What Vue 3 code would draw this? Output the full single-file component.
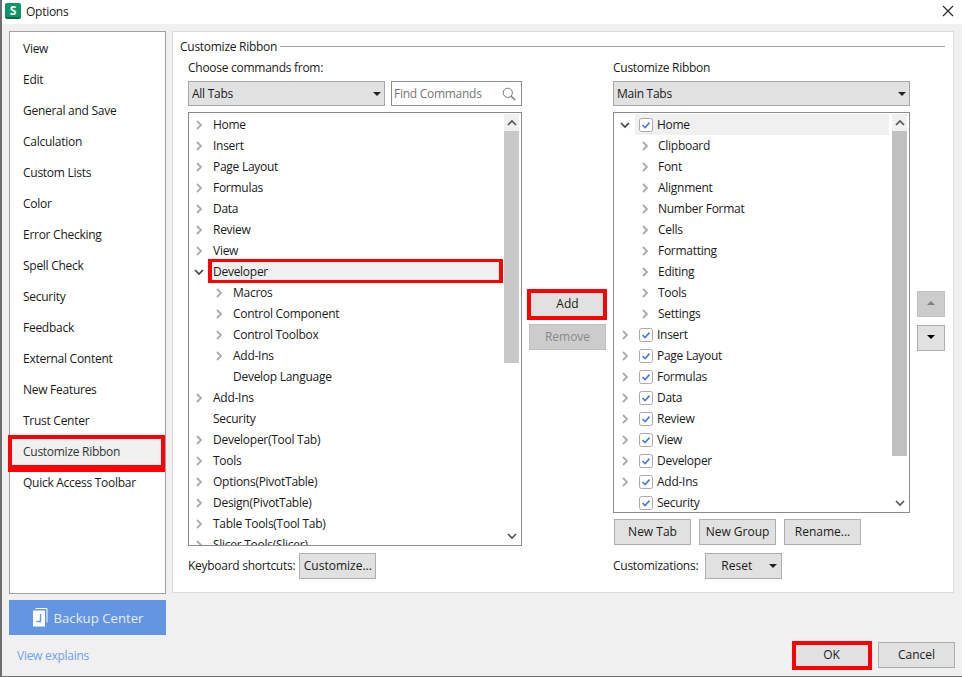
<script setup>
const navItems = ['View', 'Edit', 'General and Save', 'Calculation', 'Custom Lists', 'Color', 'Error Checking', 'Spell Check', 'Security', 'Feedback', 'External Content', 'New Features', 'Trust Center', 'Customize Ribbon', 'Quick Access Toolbar']

const commandRows = [
  { label: 'Home', level: 0 },
  { label: 'Insert', level: 0 },
  { label: 'Page Layout', level: 0 },
  { label: 'Formulas', level: 0 },
  { label: 'Data', level: 0 },
  { label: 'Review', level: 0 },
  { label: 'View', level: 0 },
  { label: 'Developer', level: 0, open: true, marked: true },
  { label: 'Macros', level: 1 },
  { label: 'Control Component', level: 1 },
  { label: 'Control Toolbox', level: 1 },
  { label: 'Add-Ins', level: 1 },
  { label: 'Develop Language', level: 1, leaf: true },
  { label: 'Add-Ins', level: 0 },
  { label: 'Security', level: 0, leaf: true },
  { label: 'Developer(Tool Tab)', level: 0 },
  { label: 'Tools', level: 0 },
  { label: 'Options(PivotTable)', level: 0 },
  { label: 'Design(PivotTable)', level: 0 },
  { label: 'Table Tools(Tool Tab)', level: 0 },
  { label: 'Slicer Tools(Slicer)', level: 0 }
]

const ribbonRows = [
  { label: 'Home', level: 0, open: true, hover: true },
  { label: 'Clipboard', level: 1 },
  { label: 'Font', level: 1 },
  { label: 'Alignment', level: 1 },
  { label: 'Number Format', level: 1 },
  { label: 'Cells', level: 1 },
  { label: 'Formatting', level: 1 },
  { label: 'Editing', level: 1 },
  { label: 'Tools', level: 1 },
  { label: 'Settings', level: 1 },
  { label: 'Insert', level: 0 },
  { label: 'Page Layout', level: 0 },
  { label: 'Formulas', level: 0 },
  { label: 'Data', level: 0 },
  { label: 'Review', level: 0 },
  { label: 'View', level: 0 },
  { label: 'Developer', level: 0 },
  { label: 'Add-Ins', level: 0 },
  { label: 'Security', level: 0, leaf: true }
]
</script>

<template>
  <div class="dialog">
    <header class="titlebar">
      <span class="app-icon">S</span>
      <span class="title">Options</span>
      <svg class="close" width="12" height="12" viewBox="0 0 12 12">
        <path d="M1 1l10 10M11 1L1 11" stroke="#222" stroke-width="1.1" fill="none" />
      </svg>
    </header>

    <div class="body">
      <aside class="side">
        <nav class="nav">
          <div
            v-for="item in navItems"
            :key="item"
            class="nav-item"
            :class="{ active: item === 'Customize Ribbon' }"
          >{{ item }}</div>
        </nav>
        <button class="backup">
          <svg width="16" height="19" viewBox="0 0 16 19">
            <path d="M3.5 0.5h11.5v14" stroke="#fff" fill="none" />
            <path d="M1 2.5h12v16h-12z" fill="#fff" />
            <path d="M8.5 6v7.5h-4" stroke="#6495e2" stroke-width="1.4" fill="none" />
          </svg>
          <span>Backup Center</span>
        </button>
        <a class="explain">View explains</a>
      </aside>

      <main class="main">
        <section class="panel">
          <div class="legend"><span>Customize Ribbon</span><i></i></div>
          <div class="columns">
            <div class="col-left">
              <div class="label">Choose commands from:</div>
              <div class="controls">
                <div class="select grow">
                  <span>All Tabs</span><b class="caret"></b>
                </div>
                <div class="search">
                  <span>Find Commands</span>
                  <svg width="14" height="14" viewBox="0 0 14 14">
                    <circle cx="5.8" cy="5.8" r="4.6" stroke="#777" fill="none" />
                    <path d="M9.2 9.2l4 4" stroke="#777" stroke-width="1.3" />
                  </svg>
                </div>
              </div>
              <div class="list list-left">
                <div class="rows">
                  <div
                    v-for="(row, i) in commandRows"
                    :key="i"
                    class="row"
                    :class="'lv' + row.level"
                  >
                    <svg v-if="row.open" class="chev" width="12" height="12" viewBox="0 0 12 12">
                      <path d="M2 4l4 4 4-4" stroke="#444" stroke-width="1.7" fill="none" />
                    </svg>
                    <svg v-else-if="!row.leaf" class="chev" width="12" height="12" viewBox="0 0 12 12">
                      <path d="M4 2l4 4-4 4" stroke="#aaa" stroke-width="1.8" fill="none" />
                    </svg>
                    <span v-else class="chev"></span>
                    <span class="row-text" :class="{ marked: row.marked }">{{ row.label }}</span>
                  </div>
                </div>
                <div class="scrollbar">
                  <div class="arrow">
                    <svg width="10" height="8" viewBox="0 0 10 8"><path d="M1 6l4-4 4 4" stroke="#555" stroke-width="1.7" fill="none" /></svg>
                  </div>
                  <div class="thumb thumb-left"></div>
                  <div class="track"></div>
                  <div class="arrow">
                    <svg width="10" height="8" viewBox="0 0 10 8"><path d="M1 2l4 4 4-4" stroke="#555" stroke-width="1.7" fill="none" /></svg>
                  </div>
                </div>
              </div>
              <div class="foot tight">
                <span>Keyboard shortcuts:</span>
                <button class="btn">Customize...</button>
              </div>
            </div>

            <div class="col-mid">
              <button class="btn add">Add</button>
              <button class="btn off">Remove</button>
            </div>

            <div class="col-right">
              <div class="label">Customize Ribbon</div>
              <div class="controls">
                <div class="select grow">
                  <span>Main Tabs</span><b class="caret"></b>
                </div>
              </div>
              <div class="list list-right">
                <div class="rows">
                  <div
                    v-for="(row, i) in ribbonRows"
                    :key="i"
                    class="row"
                    :class="'lv' + row.level"
                  >
                    <svg v-if="row.open" class="chev" width="12" height="12" viewBox="0 0 12 12">
                      <path d="M2 4l4 4 4-4" stroke="#444" stroke-width="1.7" fill="none" />
                    </svg>
                    <svg v-else-if="!row.leaf" class="chev" width="12" height="12" viewBox="0 0 12 12">
                      <path d="M4 2l4 4-4 4" stroke="#aaa" stroke-width="1.8" fill="none" />
                    </svg>
                    <span v-else class="chev"></span>
                    <span class="row-body" :class="{ hover: row.hover }">
                      <svg v-if="row.level === 0" class="check" width="14" height="14" viewBox="0 0 14 14">
                        <rect x="0.5" y="0.5" width="13" height="13" rx="2" fill="#fff" stroke="#a9a9a9" />
                        <path d="M3.5 7l2.6 2.6 4.4-5" stroke="#4a7fd0" stroke-width="1.7" fill="none" />
                      </svg>
                      <span class="row-text">{{ row.label }}</span>
                    </span>
                  </div>
                </div>
                <div class="scrollbar">
                  <div class="arrow">
                    <svg width="10" height="8" viewBox="0 0 10 8"><path d="M1 6l4-4 4 4" stroke="#555" stroke-width="1.7" fill="none" /></svg>
                  </div>
                  <div class="thumb thumb-right"></div>
                  <div class="track"></div>
                  <div class="arrow">
                    <svg width="10" height="8" viewBox="0 0 10 8"><path d="M1 2l4 4 4-4" stroke="#555" stroke-width="1.7" fill="none" /></svg>
                  </div>
                </div>
              </div>
              <div class="tab-btns">
                <button class="btn">New Tab</button>
                <button class="btn">New Group</button>
                <button class="btn">Rename...</button>
              </div>
              <div class="foot">
                <span>Customizations:</span>
                <button class="btn reset">Reset<b class="caret small"></b></button>
              </div>
            </div>

            <div class="col-move">
              <button class="btn move off"><b class="tri up"></b></button>
              <button class="btn move"><b class="tri"></b></button>
            </div>
          </div>
        </section>

        <footer class="actions">
          <button class="btn ok">OK</button>
          <button class="btn">Cancel</button>
        </footer>
      </main>
    </div>
  </div>
</template>

<style>
html, body { margin: 0; background: #f0f0f0; }
</style>

<style scoped>
* { box-sizing: border-box; }

.dialog {
  width: 962px;
  height: 677px;
  display: flex;
  flex-direction: column;
  background: #f0f0f0;
  border-left: 2px solid #6e6e6e;
  border-bottom: 1px solid #6e6e6e;
  font-family: "Open Sans", sans-serif;
  font-size: 12px;
  letter-spacing: -0.27px;
  color: #1a1a1a;
  overflow: hidden;
}

.titlebar {
  height: 24px;
  flex: none;
  display: flex;
  align-items: center;
  padding: 0 8px 2px 3px;
  background: #fff;
}
.app-icon {
  width: 16px;
  height: 16px;
  border-radius: 2px;
  background: linear-gradient(to bottom, #0f9468 14px, #0a6b4c 14px);
  color: #fff;
  font-weight: 700;
  font-size: 12px;
  line-height: 15px;
  text-align: center;
}
.title { margin-left: 5px; }
.close { margin-left: auto; }

.body {
  flex: 1;
  display: flex;
  gap: 6px;
  padding: 7px 7px 0 7px;
  min-height: 0;
}

.side { width: 157px; flex: none; display: flex; flex-direction: column; }
.nav {
  height: 563px;
  background: #fff;
  border: 1px solid #a0a0a0;
  padding-top: 2px;
}
.nav-item {
  position: relative;
  height: 31px;
  line-height: 30px;
  padding-left: 13px;
}
.nav-item.active { background: #f0f0f0; color: #333; height: 29px; margin-bottom: 2px; }
.nav-item.active::after {
  content: "";
  position: absolute;
  left: -2px;
  right: 0;
  top: -2px;
  bottom: -6px;
  border: 4px solid #f00;
  border-bottom-width: 7px;
}
.backup {
  height: 35px;
  margin-top: 6px;
  border: none;
  background: #6495e2;
  color: #e4ecfa;
  font: inherit;
  font-size: 13.2px;
  display: flex;
  align-items: center;
  justify-content: center;
  gap: 6px;
  padding: 0;
}
.explain { margin: 12px 0 0 8px; color: #6e9fee; }

.main { flex: 1; display: flex; flex-direction: column; min-width: 0; }
.panel {
  height: 562px;
  margin-right: 1px;
  background: #fff;
  border: 1px solid #dcdcdc;
  padding: 6px 0 0 7px;
}
.legend { display: flex; align-items: center; height: 16px; margin-right: 8px; }
.legend i { flex: 1; height: 1px; background: #a0a0a0; margin-left: 3px; }

.columns { display: flex; margin: 6px 0 0 8px; }
.col-left { width: 334px; flex: none; }
.col-mid { width: 80px; flex: none; margin-left: 5px; padding: 231px 0 0 2px; display: flex; flex-direction: column; align-items: flex-start; gap: 7px; }
.col-right { width: 297px; flex: none; margin-left: 6px; }
.col-move { width: 28px; flex: none; margin-left: 7px; padding-top: 231px; display: flex; flex-direction: column; gap: 8px; }

.label { height: 15px; line-height: 15px; margin-bottom: 6px; }
.controls { display: flex; gap: 6px; height: 25px; }
.grow { flex: 1; }
.select {
  display: flex;
  align-items: center;
  justify-content: space-between;
  padding: 0 3px 0 3px;
  background: #e1e1e1;
  border: 1px solid #a6a6a6;
}
.search {
  width: 131px;
  display: flex;
  align-items: center;
  justify-content: space-between;
  padding: 0 5px 0 2px;
  background: #fff;
  border: 1px solid #8c8c8c;
  color: #777;
}
.caret {
  width: 0;
  height: 0;
  border-left: 4px solid transparent;
  border-right: 4px solid transparent;
  border-top: 4px solid #222;
}

.list {
  display: flex;
  margin-top: 6px;
  border: 1px solid #8c8c8c;
  background: #fff;
  overflow: hidden;
}
.list-left { height: 434px; }
.list-right { height: 401px; }
.rows { flex: 1; min-width: 0; padding-top: 1px; }
.row { height: 21px; display: flex; align-items: center; }
.chev { width: 12px; height: 12px; flex: none; }
.list-left .lv0 { padding-left: 4px; }
.list-left .lv1 { padding-left: 24px; }
.list-left .row-text { margin-left: 8px; }
.list-right .lv0 { padding-left: 5px; }
.list-right .lv1 { padding-left: 25px; }
.list-right .lv1 .row-text { margin-left: 7px; }
.list-right .lv0 .row-text { margin-left: 4px; }
.row-text { position: relative; flex: none; }
.row-text.marked {
  flex: 1;
  margin-left: 5px !important;
  margin-right: 3px;
  padding-left: 3px;
  line-height: 21px;
  background: #f0f0f0;
}
.row-text.marked::after {
  content: "";
  position: absolute;
  inset: -2px -2px -1px -2px;
  border: solid #f00;
  border-width: 3px 4px;
}
.row-body { display: flex; align-items: center; flex: 1; height: 21px; }
.row-body.hover { background: #f0f0f0; margin-left: 4px; padding-left: 4px; margin-right: 3px; }
.check { margin-left: 8px; flex: none; }
.hover .check { margin-left: 0; }

.scrollbar { width: 15px; flex: none; margin: 1px 2px 1px 0; display: flex; flex-direction: column; }
.arrow { height: 17px; flex: none; display: flex; align-items: center; justify-content: center; background: #f0f0f0; }
.arrow:last-child { background: #fff; }
.thumb { flex: none; }
.thumb-left { height: 232px; background: #c8c8c8; }
.thumb-right { height: 325px; background: #c0c0c0; }
.track { flex: 1; }

.foot { display: flex; align-items: center; gap: 7px; margin-top: 7px; height: 26px; }
.foot > span { padding-bottom: 2px; }
.foot.tight { gap: 4px; }
.tab-btns { display: flex; gap: 8px; margin-top: 6px; margin-left: 1px; }
.tab-btns + .foot { margin-top: 8px; }

.btn {
  width: 77px;
  height: 26px;
  flex: none;
  position: relative;
  padding: 0 0 2px;
  background: #e1e1e1;
  border: 1px solid #adadad;
  color: #1a1a1a;
  font: inherit;
}
.btn.off { background: #ccc; border-color: #bfbfbf; color: #8a8a8a; }
.add::after {
  content: "";
  position: absolute;
  inset: -3px -2px -4px -3px;
  border: 4px solid #f00;
}
.ok::after {
  content: "";
  position: absolute;
  inset: -2px -3px -3px -2px;
  border: 4px solid #f00;
}
.reset { padding-right: 14px; }
.caret.small { position: absolute; right: 4px; top: 10px; }
.move { width: 28px; display: flex; align-items: center; justify-content: center; }
.tri {
  width: 0;
  height: 0;
  border-left: 4px solid transparent;
  border-right: 4px solid transparent;
  border-top: 4px solid #000;
}
.tri.up { border-top: none; border-bottom: 4px solid #808080; }

.actions { display: flex; justify-content: flex-end; gap: 8px; margin-top: 49px; }
</style>
